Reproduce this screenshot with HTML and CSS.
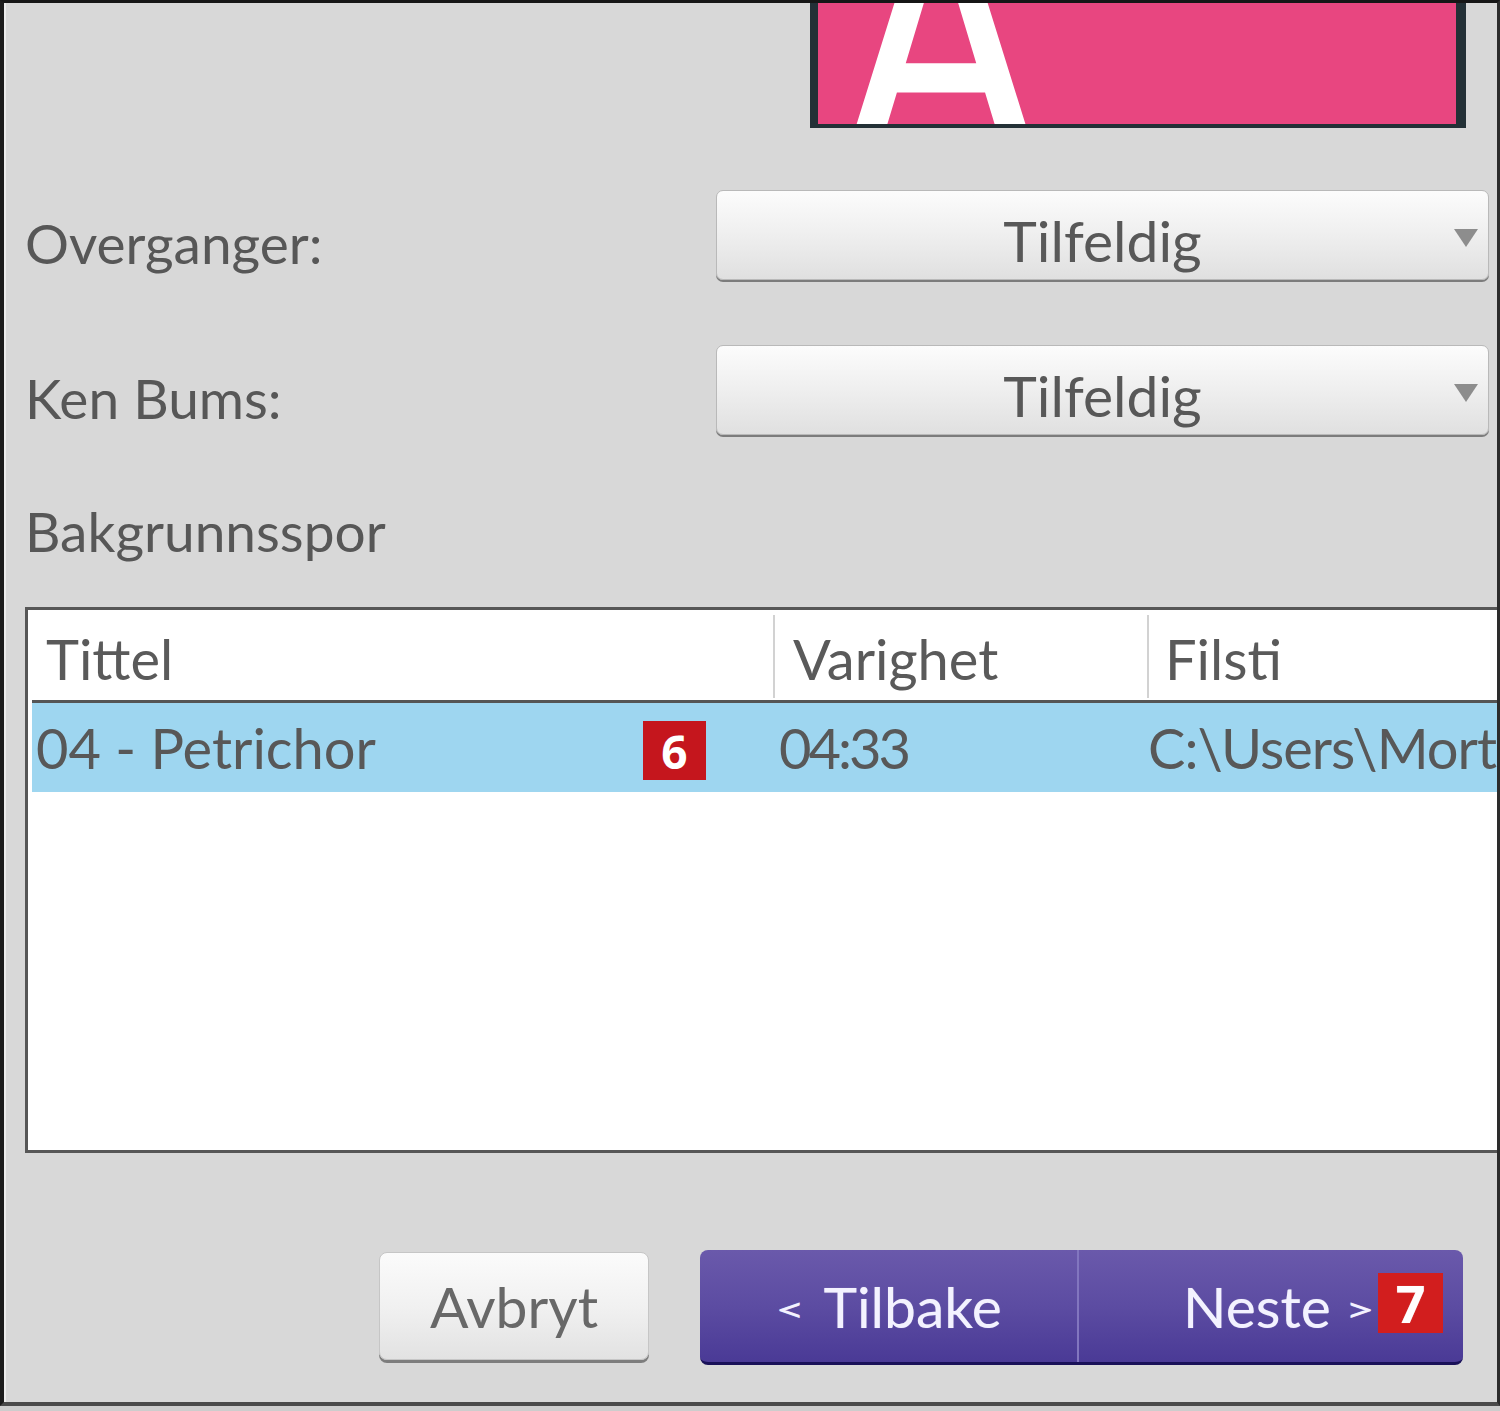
FILE: index.html
```html
<!DOCTYPE html>
<html lang="no">
<head>
<meta charset="utf-8">
<title>Bakgrunnsspor</title>
<link rel="stylesheet" href="styles.css">
</head>
<body>
<div class="window">
  <div class="thumb-row">
    <div class="thumb"><span class="thumb-letter">A</span></div>
  </div>

  <div class="form-row first">
    <div class="label">Overganger:</div>
    <div class="select"><span class="select-text">Tilfeldig</span></div>
  </div>

  <div class="form-row second">
    <div class="label">Ken Bums:</div>
    <div class="select"><span class="select-text">Tilfeldig</span></div>
  </div>

  <div class="section-label">Bakgrunnsspor</div>

  <div class="table">
    <div class="thead">
      <div class="th c1">Tittel</div>
      <div class="th c2">Varighet</div>
      <div class="th c3">Filsti</div>
    </div>
    <div class="tr selected">
      <div class="td c1">04 - Petrichor<span class="badge badge-6">6</span></div>
      <div class="td c2">04:33</div>
      <div class="td c3">C:\Users\Morten\Music\04 - Petrichor.mp3</div>
    </div>
  </div>

  <div class="actions">
    <button class="btn-light" type="button">Avbryt</button>
    <div class="btn-group">
      <button class="btn-purple back" type="button"><span class="chev">&lt;</span>Tilbake</button>
      <button class="btn-purple next" type="button">Neste<span class="chev">&gt;</span><span class="badge badge-7">7</span></button>
    </div>
  </div>
</div>
</body>
</html>
```

FILE: styles.css
```css
html, body {
  margin: 0;
  padding: 0;
}

body {
  width: 1500px;
  height: 1411px;
  overflow: hidden;
  background: #cdcdcd;
  font-family: Lato, "Open Sans", sans-serif;
  color: #575757;
}

.window {
  box-sizing: border-box;
  width: 1500px;
  height: 1406px;
  background: #d8d8d8;
  border-top: 3px solid #161616;
  border-left: 4px solid #1c1c1c;
  border-right: 3px solid #2c2c2c;
  border-bottom: 4px solid #4a4a4a;
  box-shadow: inset 2px 0 0 #ececec;
  padding-left: 21px;
  overflow: hidden;
}

/* thumbnail */
.thumb-row {
  display: flex;
  justify-content: flex-end;
  padding-right: 31px;
}

.thumb {
  position: relative;
  box-sizing: border-box;
  width: 656px;
  height: 125px;
  background: #e84680;
  border-left: 8px solid #233036;
  border-right: 10px solid #233036;
  border-bottom: 4px solid #233036;
  overflow: hidden;
}

.thumb-letter {
  position: absolute;
  left: 28px;
  top: -121px;
  font-family: Lato, sans-serif;
  font-weight: 400;
  font-size: 360px;
  line-height: 280px;
  color: #ffffff;
  -webkit-text-stroke: 4px #ffffff;
  transform: scaleX(0.78);
  transform-origin: left top;
}

/* form rows */
.form-row {
  display: grid;
  grid-template-columns: 691px 773px;
  height: 90px;
}

.form-row.first {
  margin-top: 62px;
}

.form-row.second {
  margin-top: 65px;
}

.label {
  align-self: center;
  padding-top: 16px;
  font-size: 55px;
  line-height: 66px;
  color: #575757;
}

.select {
  position: relative;
  box-sizing: border-box;
  display: flex;
  align-items: center;
  justify-content: center;
  border: 1px solid #b9b9b9;
  border-radius: 7px;
  background: linear-gradient(#fcfcfc 0%, #f0f0f0 45%, #e0e0e0 100%);
  box-shadow: 0 2px 0 #7c7c7c;
}

.select-text {
  padding-top: 10px;
  font-size: 57px;
  line-height: 66px;
  color: #585858;
}

.select::after {
  content: "";
  position: absolute;
  right: 10px;
  top: 38px;
  border-left: 12px solid transparent;
  border-right: 12px solid transparent;
  border-top: 18px solid #8d8d8d;
}

/* section label */
.section-label {
  margin-top: 63px;
  margin-bottom: 43px;
  font-size: 55px;
  line-height: 66px;
  color: #575757;
}

/* table */
.table {
  box-sizing: border-box;
  width: 1600px;
  height: 546px;
  background: #ffffff;
  border: 3px solid #575757;
  padding-left: 4px;
}

.thead {
  box-sizing: border-box;
  display: flex;
  height: 93px;
  padding-top: 5px;
  padding-bottom: 2px;
  border-bottom: 3px solid #555555;
}

.th {
  box-sizing: border-box;
  padding-top: 4px;
  font-size: 56px;
  line-height: 79px;
  color: #5a5a5a;
  white-space: nowrap;
}

.th.c1 {
  width: 741px;
  padding-left: 14px;
}

.th.c2 {
  width: 374px;
  padding-left: 18px;
  border-left: 2px solid #d2d2d2;
}

.th.c3 {
  width: 470px;
  padding-left: 16px;
  border-left: 2px solid #d2d2d2;
}

.tr {
  display: flex;
  align-items: center;
  height: 89px;
}

.tr.selected {
  background: #9ed6f0;
}

.td {
  box-sizing: border-box;
  position: relative;
  height: 89px;
  font-size: 56px;
  line-height: 89px;
  color: #585858;
  white-space: nowrap;
}

.td.c1 {
  width: 741px;
  padding-left: 4px;
}

.td.c2 {
  width: 374px;
  padding-left: 6px;
  letter-spacing: -3px;
}

.td.c3 {
  width: 470px;
  padding-left: 1px;
  letter-spacing: -1px;
}

/* annotation badges */
.badge {
  display: flex;
  align-items: center;
  justify-content: center;
  color: #ffffff;
  font-family: "Open Sans", Lato, sans-serif;
  font-weight: 700;
  line-height: 1;
  letter-spacing: 0;
}

.badge-6 {
  position: absolute;
  left: 611px;
  top: 18px;
  width: 63px;
  height: 59px;
  background: #c5161d;
  font-size: 46px;
}

.badge-7 {
  width: 65px;
  height: 60px;
  margin-left: 3px;
  margin-top: -6px;
  background: #d21e1e;
  font-size: 52px;
}

/* actions */
.actions {
  display: flex;
  justify-content: flex-end;
  align-items: flex-start;
  gap: 51px;
  margin-top: 97px;
  padding-right: 34px;
}

button {
  font-family: inherit;
  margin: 0;
  padding: 0;
  border: 0;
  cursor: pointer;
}

.btn-light {
  box-sizing: border-box;
  width: 270px;
  height: 108px;
  margin-top: 2px;
  border: 1px solid #c6c6c6;
  border-radius: 8px;
  background: linear-gradient(#fbfbfb 0%, #f1f1f1 50%, #e2e2e2 100%);
  box-shadow: 0 3px 0 #7d7d7d;
  font-size: 57px;
  color: #686868;
}

.btn-group {
  box-sizing: border-box;
  display: flex;
  width: 763px;
  height: 115px;
  border-radius: 8px;
  overflow: hidden;
  background: linear-gradient(#6a59ab 0%, #5c4ca2 50%, #4a3a96 100%);
  border-bottom: 3px solid #191158;
}

.btn-purple {
  display: flex;
  align-items: center;
  height: 112px;
  background: transparent;
  color: #f3f2ff;
  font-size: 57px;
  text-shadow: 0 0 1px rgba(255, 255, 255, 0.4);
}

.btn-purple.back {
  width: 377px;
  justify-content: center;
  padding-right: 0;
}

.btn-purple.next {
  flex: 1;
  justify-content: flex-end;
  padding-right: 20px;
  border-left: 2px solid #8276bf;
}

.chev {
  font-size: 52px;
  transform: scaleY(0.65);
  margin: 6px 18px 0 0;
}

.next .chev {
  margin: 6px 0 0 14px;
}
```
